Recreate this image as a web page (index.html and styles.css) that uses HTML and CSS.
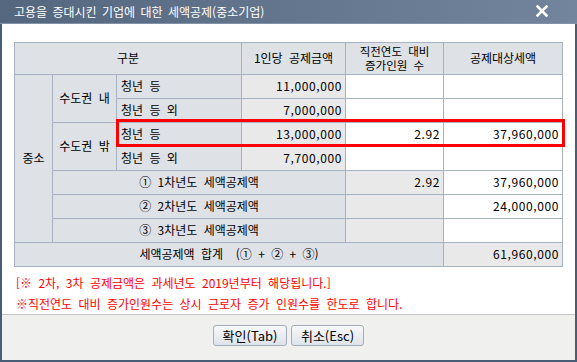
FILE: index.html
```html
<!DOCTYPE html>
<html lang="ko">
<head>
    <meta charset="UTF-8">
    <title>고용을 증대시킨 기업에 대한 세액공제(중소기업)</title>
    <link rel="stylesheet" href="styles.css">
</head>
<body>
    <div class="dialog">
        <div class="titlebar">
            <span class="title">고용을 증대시킨 기업에 대한 세액공제(중소기업)</span>
            <svg class="close" width="12" height="12" viewBox="0 0 12 12">
                <path d="M1.5 1.5 L10.5 10.5 M10.5 1.5 L1.5 10.5" stroke="#fff" stroke-width="2.6" stroke-linecap="square"/>
            </svg>
        </div>

        <div class="content">
            <div class="table-wrap">
                <table class="credit">
                    <colgroup>
                        <col style="width:38px">
                        <col style="width:64px">
                        <col style="width:125px">
                        <col style="width:104px">
                        <col style="width:98px">
                        <col style="width:119px">
                    </colgroup>
                    <tr class="head">
                        <th colspan="3">구분</th>
                        <th>1인당 공제금액</th>
                        <th class="two-line"><div>직전연도 대비</div><div>증가인원 수</div></th>
                        <th>공제대상세액</th>
                    </tr>
                    <tr>
                        <th rowspan="7">중소</th>
                        <th rowspan="2">수도권 내</th>
                        <th class="left">청년 등</th>
                        <td class="gray num">11,000,000</td>
                        <td class="num"></td>
                        <td class="num"></td>
                    </tr>
                    <tr>
                        <th class="left">청년 등 외</th>
                        <td class="gray num">7,000,000</td>
                        <td class="num"></td>
                        <td class="num"></td>
                    </tr>
                    <tr>
                        <th rowspan="2">수도권 밖</th>
                        <th class="left">청년 등</th>
                        <td class="gray num">13,000,000</td>
                        <td class="num">2.92</td>
                        <td class="num">37,960,000</td>
                    </tr>
                    <tr>
                        <th class="left">청년 등 외</th>
                        <td class="gray num">7,700,000</td>
                        <td class="num"></td>
                        <td class="num"></td>
                    </tr>
                    <tr>
                        <th colspan="3">① 1차년도 세액공제액</th>
                        <td class="gray num">2.92</td>
                        <td class="num">37,960,000</td>
                    </tr>
                    <tr>
                        <th colspan="3">② 2차년도 세액공제액</th>
                        <td class="gray num"></td>
                        <td class="num">24,000,000</td>
                    </tr>
                    <tr>
                        <th colspan="3">③ 3차년도 세액공제액</th>
                        <td class="gray num"></td>
                        <td class="num"></td>
                    </tr>
                    <tr>
                        <th colspan="5">세액공제액 합계 &nbsp;(① + ② + ③)</th>
                        <td class="gray num">61,960,000</td>
                    </tr>
                </table>
                <div class="highlight"></div>
            </div>

            <div class="notes">
                <p>[※ 2차, 3차 공제금액은 과세년도 2019년부터 해당됩니다.]</p>
                <p>※직전연도 대비 증가인원수는 상시 근로자 증가 인원수를 한도로 합니다.</p>
            </div>
        </div>

        <div class="footer">
            <button class="btn">확인(Tab)</button>
            <button class="btn">취소(Esc)</button>
        </div>
    </div>
</body>
</html>
```

FILE: styles.css
```css
body {
    margin: 0;
    font-family: "Noto Sans CJK KR", "Noto Sans", sans-serif;
    font-size: 12px;
    color: #000;
    background: #fff;
}
.dialog {
    width: 577px;
    height: 362px;
    box-sizing: border-box;
    border: 2px solid #4a5d76;
    border-top: none;
    display: flex;
    flex-direction: column;
    background: #fff;
}
.titlebar {
    height: 27px;
    margin: 0 -2px;
    padding: 0 29px 0 14px;
    display: flex;
    align-items: center;
    justify-content: space-between;
    background: linear-gradient(to right, #55677f, #72859c);
    border-bottom: 1px solid #8292a8;
    box-sizing: border-box;
}
.title {
    color: #fff;
    font-size: 12px;
    word-spacing: 2px;
}
.close {
    display: block;
}
.content {
    flex: 1;
    padding: 18px 10px 0 12px;
}
.table-wrap {
    position: relative;
    width: 548px;
}
.credit {
    border-collapse: collapse;
    table-layout: fixed;
    width: 548px;
    border: 1px solid #a6b1c1;
}
.credit th,
.credit td {
    border: 1px solid #a6b1c1;
    height: 23px;
    padding: 0 3px;
    font-weight: normal;
    font-size: 12px;
    line-height: 14px;
    word-spacing: 3px;
    white-space: nowrap;
    overflow: hidden;
}
.credit th {
    background: #dee1e6;
    text-align: center;
}
.credit .head th {
    height: 30px;
}
.credit .two-line {
    font-size: 11.5px;
    line-height: 14px;
    padding: 0 3px 1px;
}
.credit th.left {
    text-align: left;
    padding-left: 4px;
}
.credit td {
    background: #fff;
}
.credit td.gray {
    background: #e9e9e9;
}
.credit .num {
    text-align: right;
    padding-right: 3px;
    word-spacing: 0;
    letter-spacing: 0.6px;
}
.highlight {
    position: absolute;
    left: 102px;
    top: 77px;
    width: 443px;
    height: 22px;
    border: 3px solid #ff0000;
}
.notes {
    margin-top: 5px;
    color: #ff0000;
}
.notes p {
    margin: 0 0 0 2px;
    line-height: 21px;
    word-spacing: 3px;
}
.footer {
    height: 41px;
    border-top: 1px solid #c6c6c6;
    background: #f0f0ee;
    display: flex;
    justify-content: center;
    align-items: flex-start;
    gap: 4px;
    padding-top: 10px;
    box-sizing: content-box;
}
.btn {
    height: 21px;
    padding: 0 7px;
    font-family: "Noto Sans CJK KR", "Noto Sans", sans-serif;
    font-size: 13px;
    line-height: 17px;
    color: #000;
    background: linear-gradient(#f7f8fa, #dfe4ea);
    border: 1px solid #a2acba;
    border-radius: 3px;
}
.btn:first-child {
    width: 74px;
}
.btn:last-child {
    width: 73px;
}
```
